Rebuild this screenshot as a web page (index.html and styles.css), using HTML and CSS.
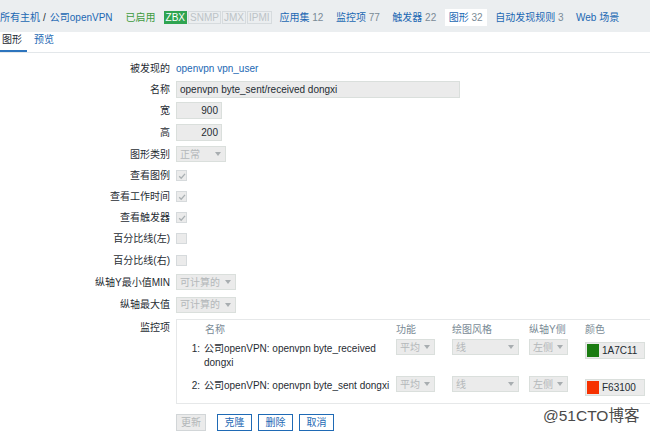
FILE: index.html
```html
<!DOCTYPE html>
<html>
<head>
<meta charset="utf-8">
<link rel="stylesheet" href="styles.css">
</head>
<body>
<div class="topbar">
  <a class="link">所有主机</a><span class="sep">/</span><a class="link">公司openVPN</a>
  <span class="status">已启用</span>
  <span class="badges"><span class="badge on">ZBX</span><span class="badge">SNMP</span><span class="badge">JMX</span><span class="badge">IPMI</span></span>
  <nav class="nav">
    <span class="nav-item"><a class="link">应用集</a> <span class="count">12</span></span>
    <span class="nav-item"><a class="link">监控项</a> <span class="count">77</span></span>
    <span class="nav-item"><a class="link">触发器</a> <span class="count">22</span></span>
    <span class="nav-item selected"><a class="link">图形</a> <span class="count">32</span></span>
    <span class="nav-item"><a class="link">自动发现规则</a> <span class="count">3</span></span>
    <span class="nav-item"><a class="link">Web 场景</a></span>
  </nav>
</div>
<div class="tabs"><span class="tab active">图形</span><span class="tab link">预览</span></div>
<div class="form">
  <div class="lbl">被发现的</div><div class="val"><a class="link">openvpn vpn_user</a></div>
  <div class="lbl">名称</div><div class="val"><span class="input wide">openvpn byte_sent/received dongxi</span></div>
  <div class="lbl">宽</div><div class="val"><span class="input num">900</span></div>
  <div class="lbl">高</div><div class="val"><span class="input num">200</span></div>
  <div class="lbl">图形类别</div><div class="val"><span class="select s49"><span>正常</span><svg class="arrow" width="6" height="4" viewBox="0 0 6 4"><polygon points="0,0 6,0 3,4"/></svg></span></div>
  <div class="lbl">查看图例</div><div class="val"><span class="checkbox"><svg width="8" height="8" viewBox="0 0 8 8"><polyline points="1.2,4.2 3.2,6.2 7,1.8"/></svg></span></div>
  <div class="lbl">查看工作时间</div><div class="val"><span class="checkbox"><svg width="8" height="8" viewBox="0 0 8 8"><polyline points="1.2,4.2 3.2,6.2 7,1.8"/></svg></span></div>
  <div class="lbl">查看触发器</div><div class="val"><span class="checkbox"><svg width="8" height="8" viewBox="0 0 8 8"><polyline points="1.2,4.2 3.2,6.2 7,1.8"/></svg></span></div>
  <div class="lbl">百分比线(左)</div><div class="val"><span class="checkbox"></span></div>
  <div class="lbl">百分比线(右)</div><div class="val"><span class="checkbox"></span></div>
  <div class="lbl">纵轴Y最小值MIN</div><div class="val"><span class="select s59"><span>可计算的</span><svg class="arrow" width="6" height="4" viewBox="0 0 6 4"><polygon points="0,0 6,0 3,4"/></svg></span></div>
  <div class="lbl">纵轴最大值</div><div class="val"><span class="select s59"><span>可计算的</span><svg class="arrow" width="6" height="4" viewBox="0 0 6 4"><polygon points="0,0 6,0 3,4"/></svg></span></div>
  <div class="lbl lbl-top">监控项</div>
  <div class="val val-top">
    <div class="items">
      <div class="item-row head">
        <span></span><span class="name">名称</span><span>功能</span><span>绘图风格</span><span>纵轴Y侧</span><span>颜色</span>
      </div>
      <div class="item-row">
        <span class="no">1:</span>
        <span class="name">公司openVPN: openvpn byte_received dongxi</span>
        <span><span class="select s38"><span>平均</span><svg class="arrow" width="6" height="4" viewBox="0 0 6 4"><polygon points="0,0 6,0 3,4"/></svg></span></span>
        <span><span class="select s66"><span>线</span><svg class="arrow" width="6" height="4" viewBox="0 0 6 4"><polygon points="0,0 6,0 3,4"/></svg></span></span>
        <span><span class="select s39"><span>左侧</span><svg class="arrow" width="6" height="4" viewBox="0 0 6 4"><polygon points="0,0 6,0 3,4"/></svg></span></span>
        <span><span class="color"><span class="swatch green"></span>1A7C11</span></span>
      </div>
      <div class="item-row second">
        <span class="no">2:</span>
        <span class="name">公司openVPN: openvpn byte_sent dongxi</span>
        <span><span class="select s38"><span>平均</span><svg class="arrow" width="6" height="4" viewBox="0 0 6 4"><polygon points="0,0 6,0 3,4"/></svg></span></span>
        <span><span class="select s66"><span>线</span><svg class="arrow" width="6" height="4" viewBox="0 0 6 4"><polygon points="0,0 6,0 3,4"/></svg></span></span>
        <span><span class="select s39"><span>左侧</span><svg class="arrow" width="6" height="4" viewBox="0 0 6 4"><polygon points="0,0 6,0 3,4"/></svg></span></span>
        <span><span class="color"><span class="swatch red"></span>F63100</span></span>
      </div>
    </div>
  </div>
  <div></div>
  <div class="buttons">
    <span class="btn disabled">更新</span><span class="btn">克隆</span><span class="btn">删除</span><span class="btn">取消</span>
  </div>
</div>
<div class="watermark">@51CTO博客</div>
</body>
</html>
```

FILE: styles.css
```css
html, body {
  margin: 0;
  padding: 0;
  overflow: hidden;
}
body {
  width: 650px;
  height: 432px;
  position: relative;
  background: #ffffff;
  color: #1f2c33;
  font-family: "Liberation Sans", Arial, "Noto Sans CJK SC", sans-serif;
  font-size: 10px;
  line-height: 13px;
}
.link {
  color: #1b68b3;
  text-decoration: none;
}
.topbar {
  height: 32px;
  box-sizing: border-box;
  padding-top: 2px;
  background: #ebeef0;
  display: flex;
  align-items: center;
  white-space: nowrap;
}
.sep {
  margin: 0 4px 0 3px;
  color: #1f2c33;
}
.status {
  margin-left: 13px;
  color: #3d9b3d;
}
.badges {
  margin-left: 8px;
  display: flex;
}
.badge {
  padding: 0 1px;
  margin-right: 1px;
  line-height: 11px;
  border: 1px solid #d6dbde;
  color: #bcc3c7;
  background: #ebeef0;
}
.badge.on {
  background: #2fa451;
  border-color: #2fa451;
  color: #ffffff;
}
.nav {
  display: flex;
  margin-left: 3px;
  gap: 4.5px;
}
.nav-item {
  padding: 0 4px;
  height: 17px;
  line-height: 17px;
}
.nav-item.selected {
  background: #ffffff;
}
.count {
  color: #7a8b96;
}
.tabs {
  display: flex;
  gap: 5px;
  border-bottom: 1px solid #e3e7ea;
}
.tab {
  padding: 0 5px 2px 2px;
  line-height: 16px;
  border-bottom: 2px solid transparent;
}
.tab.active {
  border-bottom-color: #2d74bd;
  color: #1f2c33;
}
.form {
  display: grid;
  grid-template-columns: 170px 1fr;
  grid-template-rows: 21px 21px 21px 22px 22px 21px 21px 21px 21px 22px 22px 23px auto auto;
  column-gap: 6px;
  padding-top: 5px;
}
.lbl {
  display: flex;
  align-items: center;
  justify-content: flex-end;
  white-space: nowrap;
}
.val {
  display: flex;
  align-items: center;
}
.lbl-top {
  align-items: flex-start;
  padding-top: 5px;
}
.val-top {
  align-items: flex-start;
}
.input {
  box-sizing: border-box;
  height: 17px;
  line-height: 15px;
  border: 1px solid #dadfdc;
  background: #ebebeb;
  padding: 0 3px;
  color: #1f2c33;
  white-space: nowrap;
}
.input.wide {
  width: 284px;
}
.input.num {
  width: 46px;
  text-align: right;
}
.select {
  box-sizing: border-box;
  display: inline-flex;
  align-items: center;
  justify-content: space-between;
  height: 16px;
  border: 1px solid #dadfdc;
  background: #ebebeb;
  color: #b4b8ba;
  padding: 0 4px 0 3px;
  white-space: nowrap;
}
.select .arrow {
  fill: #a8adb0;
}
.s49 { width: 50px; }
.s59 { width: 60px; }
.s38 { width: 39px; }
.s66 { width: 67px; }
.s39 { width: 39px; }
.checkbox {
  box-sizing: border-box;
  width: 11px;
  height: 11px;
  border: 1px solid #d6dadc;
  background: #ebebeb;
  display: inline-flex;
  align-items: center;
  justify-content: center;
}
.checkbox polyline {
  fill: none;
  stroke: #aab0b3;
  stroke-width: 1.3;
}
.items {
  margin-top: 3px;
  width: 490px;
  border: 1px solid #e6e8e9;
  padding: 3px 0 6px;
}
.item-row {
  display: grid;
  grid-template-columns: 26px 193px 56px 77px 56px 1fr;
  align-items: start;
}
.item-row.head {
  color: #7a8b96;
  padding-bottom: 3px;
  line-height: 13px;
}
.item-row.head .name {
  padding-left: 2px;
}
.item-row.second {
  margin-top: 6px;
}
.item-row .no {
  text-align: right;
  padding: 3px 3px 0 0;
  line-height: 14px;
}
.item-row .name {
  padding: 3px 0 0 1px;
  line-height: 14px;
}
.item-row.head .name {
  padding-top: 0;
  line-height: 13px;
}
.color {
  box-sizing: border-box;
  display: inline-flex;
  align-items: center;
  margin-top: 3px;
  width: 60px;
  height: 17px;
  border: 1px solid #dadfdc;
  background: #ebebeb;
  color: #1f2c33;
  padding-left: 1px;
}
.swatch {
  width: 12px;
  height: 13px;
  margin-right: 3px;
}
.swatch.green { background: #1a7c11; }
.swatch.red { background: #f63100; }
.buttons {
  display: flex;
  margin-top: 10px;
}
.btn {
  box-sizing: border-box;
  height: 17px;
  line-height: 15px;
  padding: 0 6.5px;
  border: 1px solid #1f6ab5;
  color: #1f6ab5;
  background: #ffffff;
  margin-right: 6px;
}
.btn.disabled {
  padding: 0 4px;
  border-color: #d2d6d8;
  background: #ebebeb;
  color: #b2b6b8;
  margin-right: 11px;
}
.watermark {
  position: absolute;
  left: 543px;
  top: 407px;
  font-size: 15.5px;
  line-height: 18px;
  color: #4a4a4a;
  white-space: nowrap;
}
```
